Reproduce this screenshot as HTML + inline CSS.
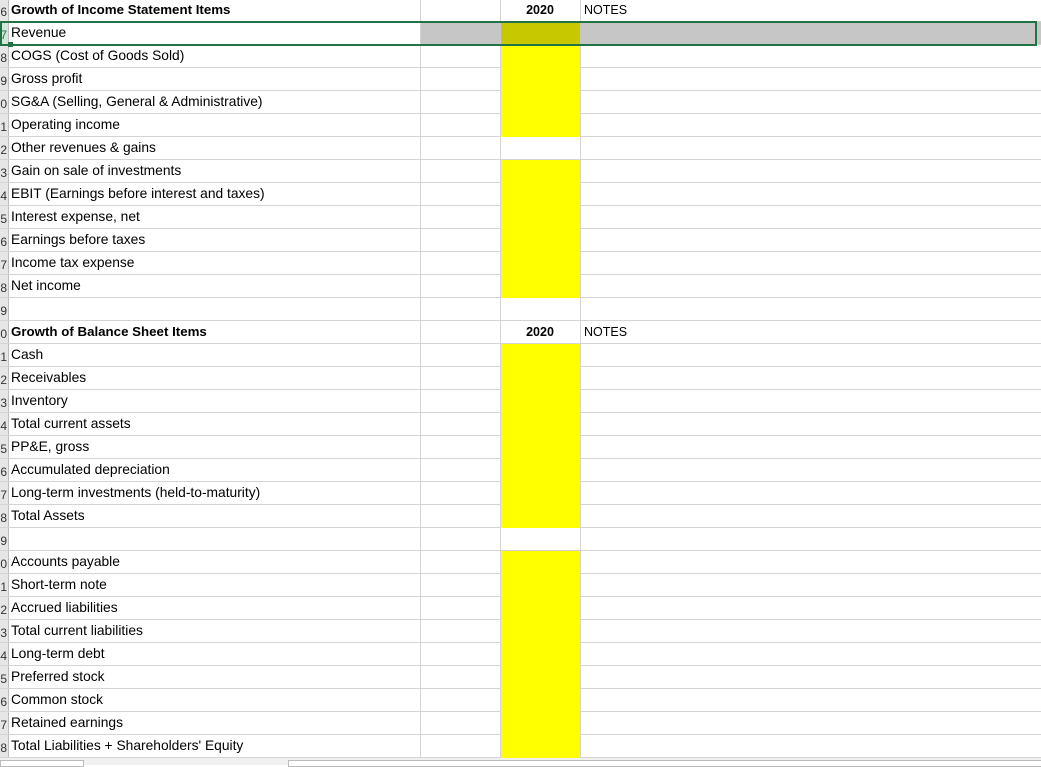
<!DOCTYPE html>
<html><head><style>
body{margin:0;width:1041px;height:765px;overflow:hidden;background:#fff;font-family:"Liberation Sans",Calibri,sans-serif;position:relative}
.r{position:absolute;left:0;width:1041px;height:23px;border-bottom:1px solid #d4d4d4;box-sizing:border-box}
.h{position:absolute;left:0;width:9px;height:100%;background:#e6e6e6;border-right:1px solid #bdbdbd;font-size:12px;line-height:26px;text-align:right;color:#333;overflow:hidden;box-sizing:border-box;padding-right:1px}
.a{position:absolute;left:11px;font-size:13.8px;line-height:22px;color:#000;white-space:nowrap}
.b{font-weight:bold;font-size:13.3px}
.y{position:absolute;left:501px;width:79px;top:0;height:23px;background:#ffff00}
.v{position:absolute;top:0;width:1px;height:758px;background:#d4d4d4}
.yr{position:absolute;left:490px;width:100px;text-align:center;font-size:12.5px;font-weight:bold;line-height:22px}
.n{position:absolute;left:584px;font-size:12.5px;line-height:22px}
</style></head><body>
<div class="v" style="left:420px"></div><div class="v" style="left:500px"></div><div class="v" style="left:580px"></div>
<div id="rows"></div>
<script>
var L={6:["Growth of Income Statement Items",1],7:["Revenue"],8:["COGS (Cost of Goods Sold)"],9:["Gross profit"],10:["SG&A (Selling, General & Administrative)"],11:["Operating income"],12:["Other revenues & gains"],13:["Gain on sale of investments"],14:["EBIT (Earnings before interest and taxes)"],15:["Interest expense, net"],16:["Earnings before taxes"],17:["Income tax expense"],18:["Net income"],19:[""],20:["Growth of Balance Sheet Items",1],21:["Cash"],22:["Receivables"],23:["Inventory"],24:["Total current assets"],25:["PP&E, gross"],26:["Accumulated depreciation"],27:["Long-term investments (held-to-maturity)"],28:["Total Assets"],29:[""],30:["Accounts payable"],31:["Short-term note"],32:["Accrued liabilities"],33:["Total current liabilities"],34:["Long-term debt"],35:["Preferred stock"],36:["Common stock"],37:["Retained earnings"],38:["Total Liabilities + Shareholders' Equity"]};
var h="";
for(var n=6;n<=38;n++){var yy=22+(n-7)*23;var yel=(n>=8&&n<=18&&n!=12)||(n>=21&&n<=28)||(n>=30);
h+='<div class="r" style="top:'+yy+'px">';
if(n==7)h+='<div style="position:absolute;left:421px;width:620px;top:0;height:22px;background:#c6c6c6"></div><div style="position:absolute;left:501px;width:79px;top:0;height:22px;background:#c8c800"></div>';
if(yel)h+='<div class="y"></div>';
h+='<div class="h"'+(n==7?' style="background:#d3e7d9;color:#217346"':'')+'>'+(n%10)+'</div><div class="a'+(L[n][1]?' b':'')+'">'+L[n][0].replace(/&/g,'&amp;')+'</div>';
if(n==6||n==20)h+='<div class="yr">2020</div><div class="n">NOTES</div>';
h+='</div>';}
h+='<div style="position:absolute;left:0;top:21px;width:1037px;height:25px;border:2px solid #217346;box-sizing:border-box"></div><div style="position:absolute;left:8px;top:42px;width:5px;height:5px;background:#217346"></div>';
h+='<div style="position:absolute;left:0;top:758px;width:1041px;height:7px;background:#f0f0f0"><div style="position:absolute;left:0;top:2px;width:82px;height:5px;background:#fff;border:1px solid #bbb"></div><div style="position:absolute;left:288px;top:2px;width:753px;height:5px;background:#fff;border:1px solid #bbb"></div></div>';
document.getElementById("rows").innerHTML=h;
</script>
</body></html>
